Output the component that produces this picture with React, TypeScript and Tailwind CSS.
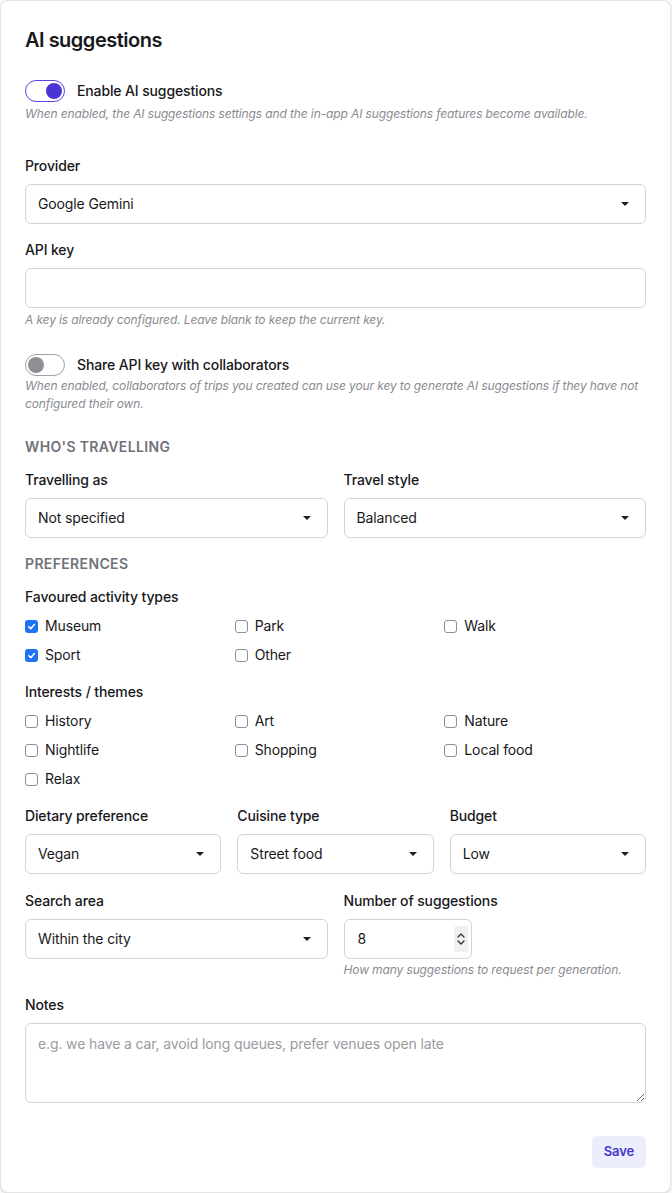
import React from "react";

const Arrow = () => (
  <svg width="8" height="4" viewBox="0 0 8 4" className="shrink-0">
    <path d="M0 0 H8 L4 4 Z" fill="#1f1f1f" />
  </svg>
);

function Select({ value, className = "" }: { value: string; className?: string }) {
  return (
    <div
      className={
        "h-10 flex items-center justify-between rounded-md border border-[#d4d4d8] bg-white pl-3 pr-4 text-sm text-[#18181b] " +
        className
      }
    >
      <span>{value}</span>
      <Arrow />
    </div>
  );
}

function Label({ children }: { children: React.ReactNode }) {
  return <div className="text-sm font-medium leading-5 text-[#18181b] mb-2">{children}</div>;
}

function Help({ children, className = "" }: { children: React.ReactNode; className?: string }) {
  return <p className={"text-xs italic tracking-[-0.01em] text-[#8a8a8f] " + className}>{children}</p>;
}

function Toggle({ on }: { on: boolean }) {
  return on ? (
    <div className="w-10 h-[22px] rounded-full border-[1.5px] border-[#5b45e6] bg-white flex items-center justify-end px-[2px]">
      <div className="w-4 h-4 rounded-full bg-[#4a34d6]" />
    </div>
  ) : (
    <div className="w-10 h-[22px] rounded-full border border-[#a1a1aa] bg-white flex items-center justify-start px-[2px]">
      <div className="w-4 h-4 rounded-full bg-[#8e8e93]" />
    </div>
  );
}

function Check({ label, checked = false }: { label: string; checked?: boolean }) {
  return (
    <div className="flex items-center gap-[7px] h-5 text-sm text-[#18181b]">
      {checked ? (
        <div className="w-[13px] h-[13px] rounded-[3px] bg-[#1e73f0] flex items-center justify-center">
          <svg width="9" height="9" viewBox="0 0 10 10">
            <path d="M2 5.2 L4.2 7.4 L8.2 2.8" fill="none" stroke="white" strokeWidth="1.7" strokeLinecap="round" strokeLinejoin="round" />
          </svg>
        </div>
      ) : (
        <div className="w-[13px] h-[13px] rounded-[3px] border border-[#8e8e93] bg-white" />
      )}
      <span>{label}</span>
    </div>
  );
}

function SectionTitle({ children, className = "" }: { children: React.ReactNode; className?: string }) {
  return (
    <div className={"text-sm font-semibold leading-5 uppercase tracking-wide text-[#71717a] " + className}>
      {children}
    </div>
  );
}

export default function App() {
  return (
    <div
      className="min-h-[1193px] w-[672px] bg-[#fafafa] tracking-[-0.008em]"
      style={{ fontFamily: "Inter, 'Noto Sans', 'Liberation Sans', sans-serif" }}
    >
      <div className="w-[671px] rounded-lg border border-[#e4e4e7] bg-white px-6 pt-[25px] pb-6 shadow-sm">
        <h2 className="text-xl font-semibold leading-7 tracking-[-0.025em] text-[#18181b]">AI suggestions</h2>

        <div className="mt-[26px] flex items-center gap-3">
          <Toggle on />
          <span className="text-sm font-medium text-[#18181b]">Enable AI suggestions</span>
        </div>
        <Help className="mt-1 leading-4">
          When enabled, the AI suggestions settings and the in-app AI suggestions features become available.
        </Help>

        <div className="mt-[34px]">
          <Label>Provider</Label>
          <Select value="Google Gemini" />
        </div>

        <div className="mt-4">
          <Label>API key</Label>
          <div className="h-10 rounded-md border border-[#d4d4d8] bg-white" />
          <Help className="mt-1 leading-4">A key is already configured. Leave blank to keep the current key.</Help>
        </div>

        <div className="mt-[26px] flex items-center gap-3">
          <Toggle on={false} />
          <span className="text-sm font-medium text-[#18181b]">Share API key with collaborators</span>
        </div>
        <Help className="mt-px leading-[18px]">
          When enabled, collaborators of trips you created can use your key to generate AI suggestions if they have not
          configured their own.
        </Help>

        <SectionTitle className="mt-6">Who's travelling</SectionTitle>

        <div className="mt-[13px] grid grid-cols-2 gap-x-4">
          <div>
            <Label>Travelling as</Label>
            <Select value="Not specified" />
          </div>
          <div>
            <Label>Travel style</Label>
            <Select value="Balanced" />
          </div>
        </div>

        <SectionTitle className="mt-4">Preferences</SectionTitle>

        <div className="mt-[13px] text-sm font-medium leading-5 text-[#18181b]">Favoured activity types</div>
        <div className="mt-[9px] grid grid-cols-3 gap-x-2 gap-y-[9px]">
          <Check label="Museum" checked />
          <Check label="Park" />
          <Check label="Walk" />
          <Check label="Sport" checked />
          <Check label="Other" />
        </div>

        <div className="mt-[17px] text-sm font-medium leading-5 text-[#18181b]">Interests / themes</div>
        <div className="mt-[9px] grid grid-cols-3 gap-x-2 gap-y-[9px]">
          <Check label="History" />
          <Check label="Art" />
          <Check label="Nature" />
          <Check label="Nightlife" />
          <Check label="Shopping" />
          <Check label="Local food" />
          <Check label="Relax" />
        </div>

        <div className="mt-[17px] grid grid-cols-3 gap-x-4">
          <div>
            <Label>Dietary preference</Label>
            <Select value="Vegan" />
          </div>
          <div>
            <Label>Cuisine type</Label>
            <Select value="Street food" />
          </div>
          <div>
            <Label>Budget</Label>
            <Select value="Low" />
          </div>
        </div>

        <div className="mt-[17px] grid grid-cols-2 gap-x-4">
          <div>
            <Label>Search area</Label>
            <Select value="Within the city" />
          </div>
          <div>
            <Label>Number of suggestions</Label>
            <div className="h-10 w-32 flex items-center justify-between rounded-md border border-[#d4d4d8] bg-white pl-[13px] pr-[3px] text-sm text-[#18181b]">
              <span>8</span>
              <div className="w-[14px] h-[26px] rounded-[3px] bg-[#f0f0f2] flex items-center justify-center">
                <svg width="10" height="16" viewBox="0 0 10 16">
                  <path d="M2 6 L5 3 L8 6" fill="none" stroke="#333" strokeWidth="1.3" strokeLinecap="round" strokeLinejoin="round" />
                  <path d="M2 10 L5 13 L8 10" fill="none" stroke="#333" strokeWidth="1.3" strokeLinecap="round" strokeLinejoin="round" />
                </svg>
              </div>
            </div>
            <Help className="mt-[3px] leading-4">How many suggestions to request per generation.</Help>
          </div>
        </div>

        <div className="mt-[17px]">
          <Label>Notes</Label>
          <textarea
            className="block h-20 w-full rounded-md border border-[#d4d4d8] bg-white px-3 py-[10px] text-sm text-[#18181b] placeholder:text-[#9a9aa0] outline-none"
            placeholder="e.g. we have a car, avoid long queues, prefer venues open late"
          />
        </div>

        <div className="mt-[33px] flex justify-end">
          <button className="h-8 rounded-md bg-[#eceefe] px-3 text-[13px] font-semibold text-[#4338ca]">Save</button>
        </div>
      </div>
    </div>
  );
}
